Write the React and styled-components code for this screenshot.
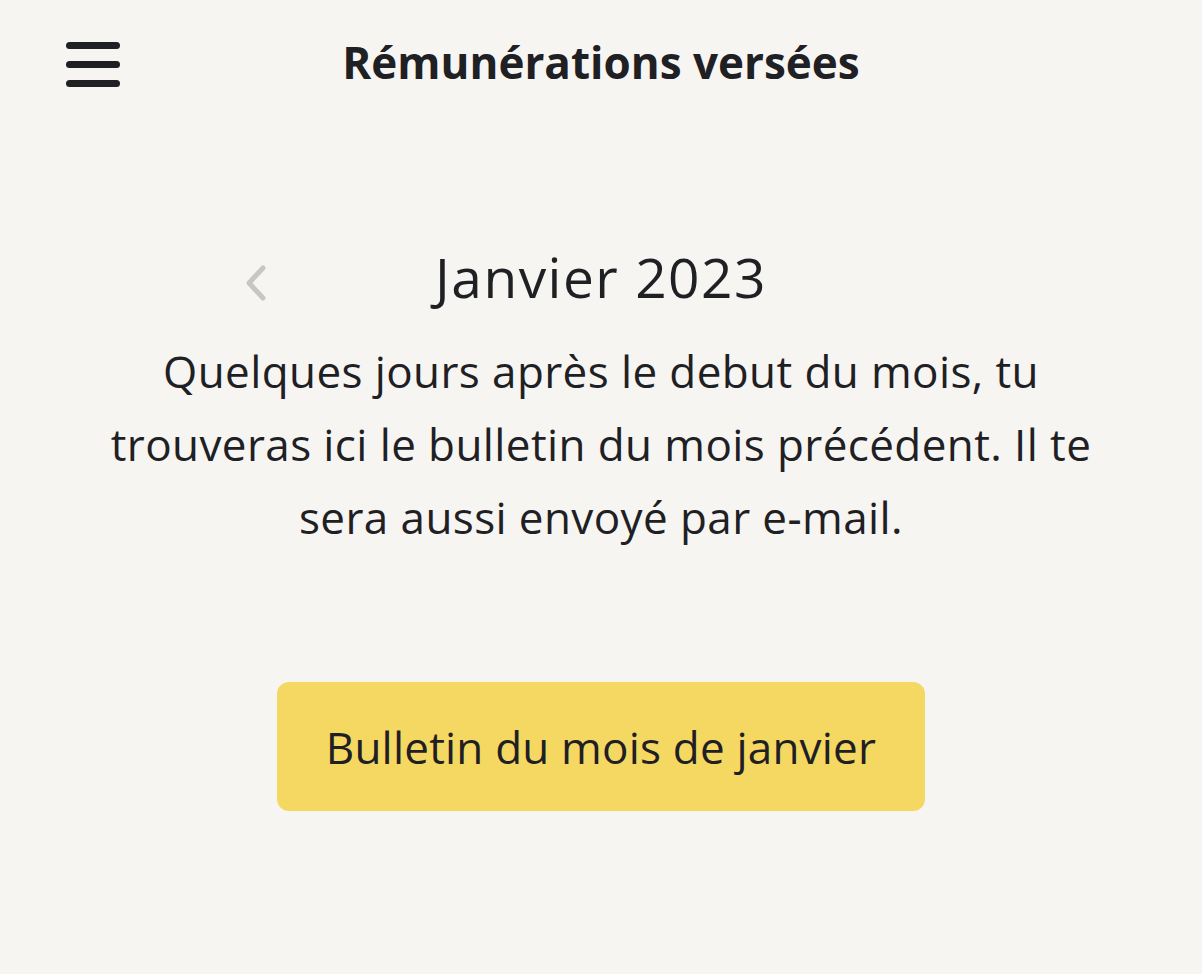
import React from "react";
import styled, { createGlobalStyle } from "styled-components";

const GlobalStyle = createGlobalStyle`
  html, body {
    margin: 0;
    padding: 0;
    background: #f6f5f2;
  }
  body {
    font-family: "Open Sans", "Noto Sans", sans-serif;
    color: #1f2024;
  }
`;

const Page = styled.div`
  width: 1202px;
  min-height: 974px;
  background: #f6f5f2;
  display: flex;
  flex-direction: column;
  align-items: center;
`;

const Header = styled.header`
  width: 100%;
  height: 124px;
  box-sizing: border-box;
  display: grid;
  grid-template-columns: 1fr auto 1fr;
  align-items: center;
  padding: 0 66px;
`;

const MenuButton = styled.button`
  justify-self: start;
  margin-top: 4px;
  width: 54px;
  height: 45px;
  padding: 0;
  border: none;
  background: none;
  display: flex;
  flex-direction: column;
  justify-content: space-between;
  cursor: pointer;
`;

const MenuLine = styled.span`
  display: block;
  width: 54px;
  height: 7px;
  border-radius: 4px;
  background: #1f2024;
`;

const Title = styled.h1`
  margin: 0;
  font-size: 44px;
  font-weight: 700;
`;

const MonthRow = styled.div`
  margin-top: 118px;
  width: 100%;
  display: grid;
  grid-template-columns: 1fr auto 1fr;
  align-items: center;
`;

const PrevButton = styled.button`
  justify-self: end;
  margin: 12px 166px 0 0;
  border: none;
  background: none;
  padding: 0;
  display: flex;
  cursor: pointer;
`;

const Month = styled.h2`
  margin: 0;
  font-size: 55px;
  font-weight: 400;
  letter-spacing: 1.5px;
  line-height: 70px;
`;

const Text = styled.p`
  margin: 23px 0 0;
  max-width: 1000px;
  text-align: center;
  font-size: 44px;
  letter-spacing: 0.4px;
  line-height: 73px;
`;

const Cta = styled.button`
  margin-top: 128px;
  width: 648px;
  height: 129px;
  border: none;
  border-radius: 12px;
  background: #f5d862;
  color: #1f2024;
  font-family: "Open Sans", "Noto Sans", sans-serif;
  font-size: 44px;
  letter-spacing: 0.2px;
  cursor: pointer;
`;

export default function App() {
  return (
    <>
      <GlobalStyle />
      <Page>
        <Header>
          <MenuButton aria-label="Menu">
            <MenuLine />
            <MenuLine />
            <MenuLine />
          </MenuButton>
          <Title>Rémunérations versées</Title>
          <span />
        </Header>
        <MonthRow>
          <PrevButton aria-label="Mois précédent">
            <svg width="26" height="38" viewBox="0 0 26 38" fill="none">
              <path d="M20 4 L6 19 L20 34" stroke="#c6c6c4" strokeWidth="5" strokeLinecap="round" strokeLinejoin="round" />
            </svg>
          </PrevButton>
          <Month>Janvier 2023</Month>
          <span />
        </MonthRow>
        <Text>
          Quelques jours après le debut du mois, tu trouveras ici le bulletin du mois précédent. Il te sera aussi envoyé par e‑mail.
        </Text>
        <Cta>Bulletin du mois de janvier</Cta>
      </Page>
    </>
  );
}
